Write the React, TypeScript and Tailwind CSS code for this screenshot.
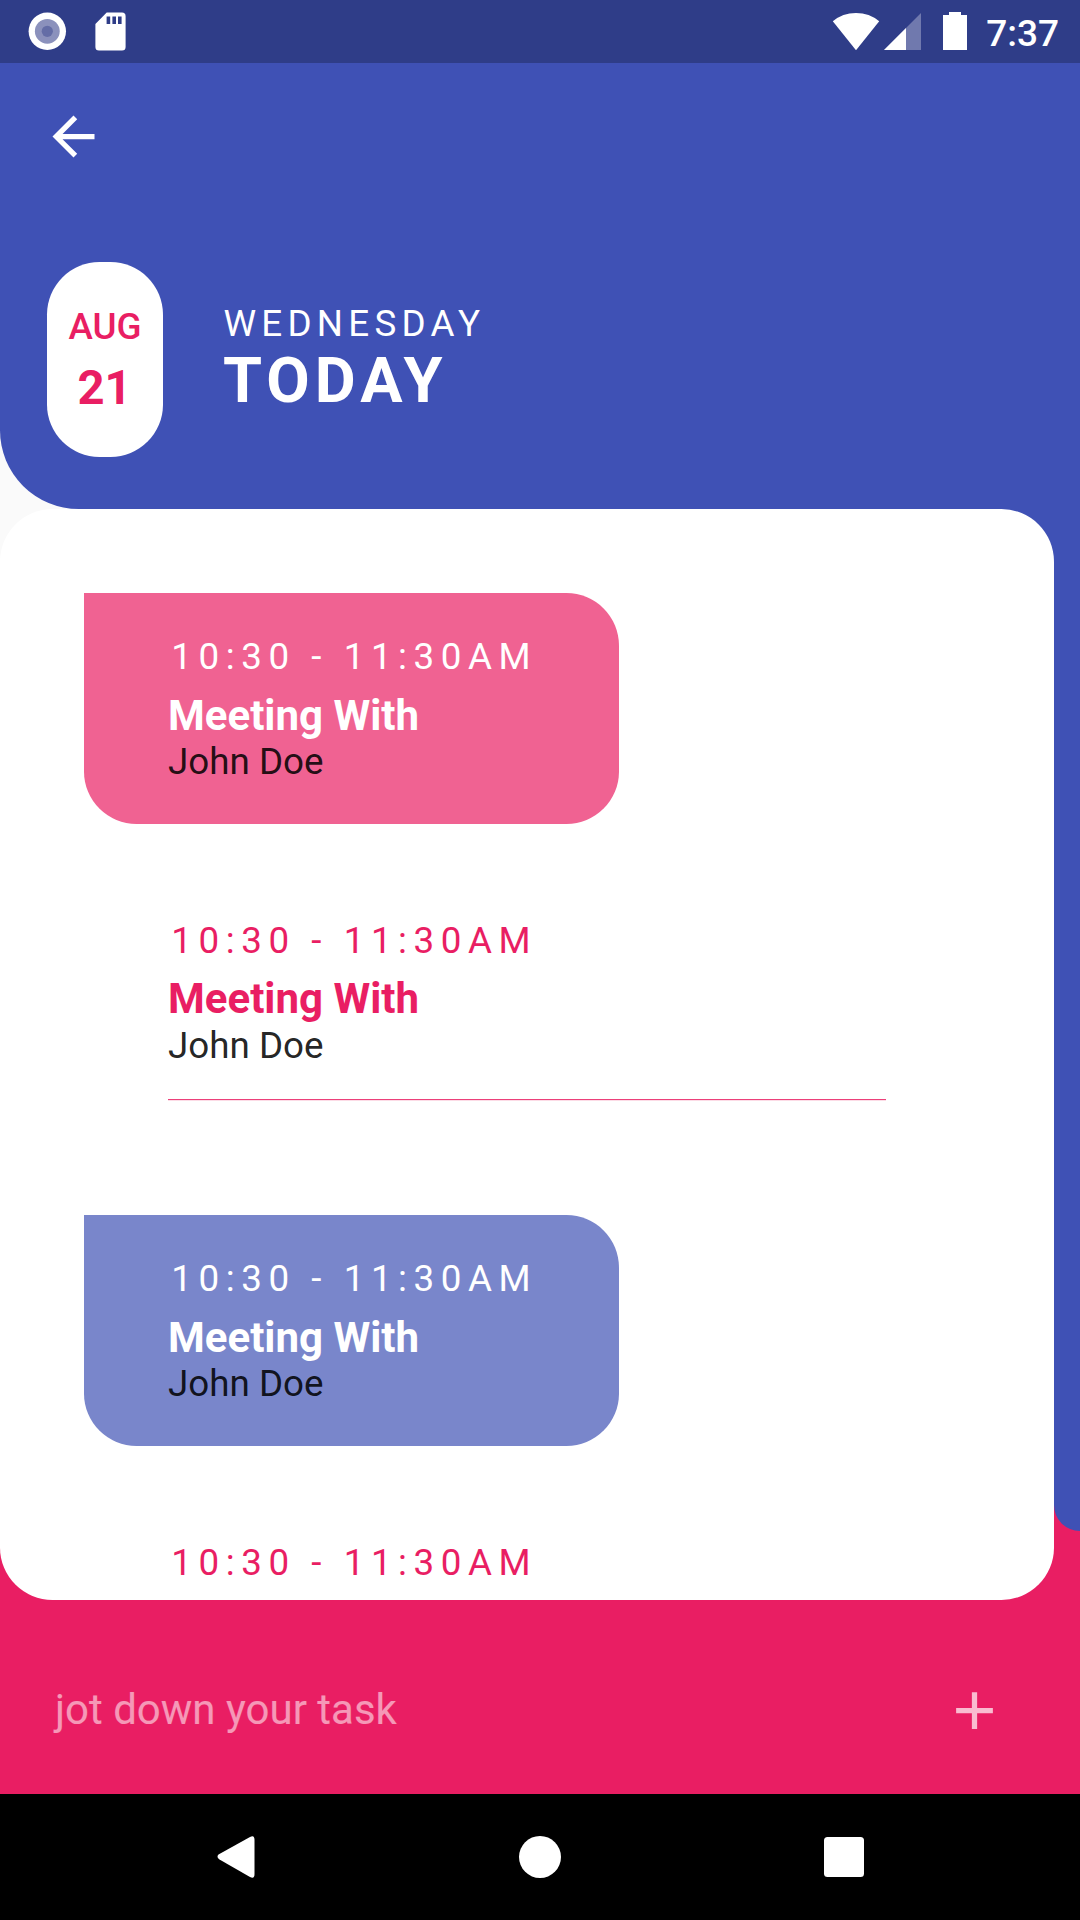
import React from 'react';

type Tone = 'pink' | 'indigo' | 'plain';

const tones: Record<Tone, { card: string; text: string; title: string }> = {
  pink: { card: 'bg-[#F06292]', text: 'text-white', title: 'mt-[13px] mb-0' },
  indigo: { card: 'bg-[#7986CB]', text: 'text-white', title: 'mt-[13px] mb-0' },
  plain: { card: '', text: 'text-[#E91E63]', title: 'mt-[12px] mb-[1px]' },
};

function TimeRange() {
  return (
    <div className="pl-[3.28px] text-[36.75px] leading-[43px] tracking-[6.5625px]">10:30 - 11:30AM</div>
  );
}

function Meeting({ tone }: { tone: Tone }) {
  return (
    <div className={tones[tone].text}>
      <TimeRange />
      <div className={`text-[42px] font-bold leading-[49px] ${tones[tone].title}`}>Meeting With</div>
      <div className="text-[36.75px] leading-[43px] text-black/[0.87]">John Doe</div>
    </div>
  );
}

function FilledTask({ tone }: { tone: Tone }) {
  return (
    <div
      className={`ml-[84px] h-[230.8px] w-[535.2px] shrink-0 rounded-[52.5px] rounded-tl-none pl-[84px] pt-[42px] ${tones[tone].card}`}
    >
      <Meeting tone={tone} />
    </div>
  );
}

function PlainTask() {
  return (
    <div className="mb-[115.2px] ml-[168px] mt-[95.2px] h-[181px] w-[718px] shrink-0 border-b border-[#EC407A] shadow-[0_1px_0_#FCDCE6]">
      <Meeting tone="plain" />
    </div>
  );
}

function StatusBar() {
  return (
    <div className="flex h-[63px] items-start justify-between bg-[#2F3D88] text-white">
      <svg width="140" height="63" viewBox="0 0 140 63">
        <circle cx="47.3" cy="31.3" r="18.7" fill="#fff" />
        <circle cx="47.3" cy="31.3" r="12.4" fill="#8B91BC" />
        <circle cx="47.3" cy="31.3" r="5.6" fill="#646DA6" />
        <path
          fill="#fff"
          fillRule="evenodd"
          d="M106.7 12.6H122q3.6 0 3.6 3.6V47q0 3.5-3.6 3.5H99q-3.6 0-3.6-3.5V24zM106.6 16.5V24h3.6v-7.5zM112.4 16.5V24h3.6v-7.5zM118 16.5V24h3.6v-7.5z"
        />
      </svg>
      <div className="flex items-start pr-[21px]">
        <svg width="144" height="63" viewBox="830 0 144 63">
          <path fill="#fff" d="M856 50.2L832.8 21.3Q842.5 13 856 13t23.2 8.300z" />
          <path fill="#7079AE" d="M884 50L921 13V50z" />
          <path fill="#fff" d="M884 50L906 28V50z" />
          <path fill="#fff" d="M943 15h6v-3h12v3h6v35h-24z" />
        </svg>
        <span className="ml-[12px] mt-[12px] text-[37px] font-medium leading-[43px]">7:37</span>
      </div>
    </div>
  );
}

function Header() {
  return (
    <header className="h-[446px] rounded-bl-[78.75px] bg-[#3F51B5]">
      <svg className="ml-[42px] translate-y-[42px]" width="63" height="63" viewBox="0 0 24 24" fill="#fff">
        <path d="M20 11H7.83l5.59-5.59L12 4l-8 8 8 8 1.41-1.41L7.83 13H20v-2z" />
      </svg>
      <div className="mt-[136.4px] flex pl-[47.4px]">
        <div className="flex h-[194.4px] w-[115.2px] flex-col items-center rounded-[52.5px] bg-white pt-[42.6px] text-[#E91E63]">
          <div className="text-[36.75px] font-medium leading-[43px]">AUG</div>
          <div className="mr-[1px] mt-[12px] text-[47.25px] font-bold leading-[56px]">21</div>
        </div>
        <div className="ml-[60.9px] pt-[39.6px] text-white">
          <div className="text-[36.75px] leading-[43px] tracking-[5.25px]">WEDNESDAY</div>
          <div className="-ml-[0.5px] -mt-[1px] text-[63px] font-bold leading-[73px] tracking-[5.1px]">TODAY</div>
        </div>
      </div>
    </header>
  );
}

function Body() {
  return (
    <main className="grid h-[1285px] grid-cols-1 grid-rows-1">
      <div className="col-start-1 row-start-1 flex flex-col">
        <div className="flex h-[545px] justify-end">
          <div className="w-20 bg-[#3F51B5]" />
        </div>
        <div className="flex flex-1 items-start justify-end bg-[#E91E63]">
          <div className="h-[477px] w-[26.25px] rounded-bl-[26.25px] bg-[#3F51B5]" />
        </div>
      </div>
      <div className="col-start-1 row-start-1 flex flex-col">
        <div className="flex h-[1091px] w-[1053.75px] shrink-0 flex-col overflow-hidden rounded-[52.5px] bg-white pt-[84px]">
          <FilledTask tone="pink" />
          <PlainTask />
          <FilledTask tone="indigo" />
          <div className="ml-[168px] mt-[95.2px] text-[#E91E63]">
            <TimeRange />
          </div>
        </div>
        <div className="flex h-[194px] items-center justify-between pl-[55px] pr-[73.6px]">
          <span className="mt-[25px] text-[42px] leading-[49px] text-white/[0.54]">jot down your task</span>
          <svg className="mt-[27px]" width="63" height="63" viewBox="0 0 24 24" fill="#fff" fillOpacity="0.7">
            <path d="M19 13h-6v6h-2v-6H5v-2h6V5h2v6h6v2z" />
          </svg>
        </div>
      </div>
    </main>
  );
}

function NavBar() {
  return (
    <nav className="h-[126px] bg-black">
      <svg width="1080" height="126" viewBox="0 0 1080 126" fill="#fff">
        <path d="M218.5 60.5L250 43Q254.5 40.5 254.5 46V80Q254.5 85.5 250 83L219.5 65.5Q216 63 218.5 60.5z" />
        <circle cx="540" cy="63" r="21" />
        <rect x="824" y="43" width="40" height="40" rx="3.5" />
      </svg>
    </nav>
  );
}

export default function App() {
  return (
    <div className="flex h-[1920px] w-[1080px] flex-col overflow-hidden bg-[#FAFAFA] font-['Roboto',sans-serif]">
      <StatusBar />
      <Header />
      <Body />
      <NavBar />
    </div>
  );
}
